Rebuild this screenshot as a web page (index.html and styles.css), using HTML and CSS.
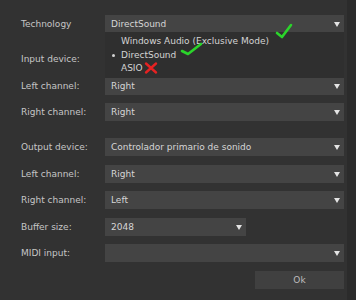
FILE: index.html
```html
<!DOCTYPE html>
<html>
<head>
<meta charset="utf-8">
<link rel="stylesheet" href="styles.css">
</head>
<body>
<div class="dialog">
  <div class="form">
    <div class="row">
      <span class="label">Technology</span>
      <div class="combo">
        <span class="value">DirectSound</span><span class="arrow"></span>
        <div class="popup">
          <div class="item">Windows Audio (Exclusive Mode)</div>
          <div class="item current"><span class="bullet"></span>DirectSound</div>
          <div class="item">ASIO</div>
        </div>
      </div>
    </div>
    <div class="spacer"></div>
    <div class="row"><span class="label">Input device:</span><div class="combo"><span class="value"></span><span class="arrow"></span></div></div>
    <div class="row"><span class="label">Left channel:</span><div class="combo"><span class="value">Right</span><span class="arrow"></span></div></div>
    <div class="row"><span class="label">Right channel:</span><div class="combo"><span class="value">Right</span><span class="arrow"></span></div></div>
    <div class="spacer"></div>
    <div class="row"><span class="label">Output device:</span><div class="combo"><span class="value">Controlador primario de sonido</span><span class="arrow"></span></div></div>
    <div class="row"><span class="label">Left channel:</span><div class="combo"><span class="value">Right</span><span class="arrow"></span></div></div>
    <div class="row"><span class="label">Right channel:</span><div class="combo"><span class="value">Left</span><span class="arrow"></span></div></div>
    <div class="row"><span class="label">Buffer size:</span><div class="combo short"><span class="value">2048</span><span class="arrow"></span></div></div>
    <div class="row"><span class="label">MIDI input:</span><div class="combo"><span class="value"></span><span class="arrow"></span></div></div>
  </div>
  <div class="footer"><div class="ok">Ok</div></div>
  <svg class="marks" width="356" height="300" viewBox="0 0 356 300">
    <path d="M277 33 L282 37 L291 25" fill="none" stroke="#2bd42b" stroke-width="2.6" stroke-linecap="round" stroke-linejoin="round"/>
    <path d="M182 51 L188 54 L201 44" fill="none" stroke="#2bd42b" stroke-width="2.6" stroke-linecap="round" stroke-linejoin="round"/>
    <path d="M146 63.5 L156 72.5 M156 63.5 L146 72.5" fill="none" stroke="#e52222" stroke-width="2.4" stroke-linecap="round"/>
  </svg>
</div>
</body>
</html>
```

FILE: styles.css
```css
html, body {
  margin: 0;
  padding: 0;
}
body {
  background: #2b2b2b;
  width: 356px;
  height: 300px;
  overflow: hidden;
  font-family: "DejaVu Sans", sans-serif;
  font-size: 9px;
  color: #c9c9c9;
}
.dialog {
  position: relative;
  width: 347px;
  height: 300px;
  background: #323232;
  box-sizing: border-box;
  padding: 15px 0 0 21px;
}
.form {
  display: flex;
  flex-direction: column;
}
.row {
  display: flex;
  align-items: center;
  height: 18px;
  margin-bottom: 8.5px;
}
.spacer {
  height: 8.5px;
}
.label {
  width: 84px;
  flex: none;
  color: #c6c6c6;
}
.combo {
  position: relative;
  width: 239px;
  height: 18px;
  background: #444444;
  display: flex;
  align-items: center;
  box-sizing: border-box;
  padding-left: 6px;
  color: #d6d6d6;
}
.combo.short {
  width: 141px;
}
.value {
  flex: 1;
  white-space: nowrap;
}
.arrow {
  width: 0;
  height: 0;
  border-left: 3.5px solid transparent;
  border-right: 3.5px solid transparent;
  border-top: 5px solid #e4e4e4;
  margin-right: 4px;
  margin-top: 1px;
}
.popup {
  position: absolute;
  top: 17px;
  left: 0;
  width: 239px;
  height: 46px;
  background: #2f2f2f;
  box-sizing: border-box;
  padding-top: 3px;
  z-index: 2;
}
.item {
  position: relative;
  height: 13.5px;
  line-height: 13.5px;
  padding-left: 16px;
  color: #d4d4d4;
  white-space: nowrap;
}
.bullet {
  position: absolute;
  left: 7px;
  top: 5.5px;
  width: 3px;
  height: 3px;
  border-radius: 50%;
  background: #d4d4d4;
}
.footer {
  display: flex;
  justify-content: flex-end;
  width: 323px;
}
.ok {
  width: 89px;
  height: 18px;
  line-height: 18px;
  text-align: center;
  background: #404040;
  color: #bdbdbd;
}
.marks {
  position: absolute;
  left: 0;
  top: 0;
  pointer-events: none;
  z-index: 5;
}
```
